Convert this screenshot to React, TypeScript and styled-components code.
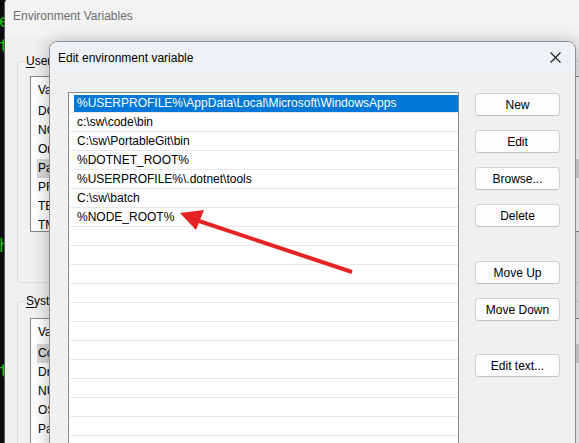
import React from 'react';
import styled, { createGlobalStyle } from 'styled-components';

const GlobalStyle = createGlobalStyle`
  html, body {
    margin: 0;
    padding: 0;
    background: #0c0c0c;
    overflow: hidden;
  }
  * {
    box-sizing: border-box;
  }
`;

const uiFont = `"Liberation Sans", Arial, sans-serif`;

// desktop holding the windows
const Desktop = styled.div`
  position: relative;
  width: 579px;
  height: 443px;
  overflow: hidden;
  background: #0c0c0c;
  font-family: ${uiFont};
  font-size: 12px;
  color: #000;
`;

const Terminal = styled.div`
  display: flex;
  flex-direction: column;
  padding-top: 9px;
  width: 5px;
  height: 100%;
  overflow: hidden;
  font-family: "DejaVu Sans Mono", monospace;
  font-size: 17px;
  line-height: 25px;
  color: #16c60c;
`;

const TermLine = styled.div`
  height: 25px;
  white-space: pre;
  margin-left: -1px;
`;

// parent window: Environment Variables
const ParentWindow = styled.div`
  position: absolute;
  left: 4px;
  top: -4px;
  width: 700px;
  height: 470px;
  background: #f0f0f0;
  border: 1px solid #5c5c5c;
  border-radius: 8px;
  display: flex;
  flex-direction: column;
`;

const ParentTitle = styled.div`
  flex-shrink: 0;
  height: 40px;
  padding: 12px 0 0 8px;
  background: #f3f3f3;
  border-radius: 8px 8px 0 0;
  color: #6d6d6d;
  font-size: 12px;
`;

const ParentBody = styled.div`
  display: flex;
  flex-direction: column;
  padding: 17px 0 0 12px;
`;

const GroupBox = styled.fieldset<{ $height: number; $padTop: number }>`
  flex-shrink: 0;
  margin: 0;
  padding: ${(p) => p.$padTop}px 0 0 12px;
  height: ${(p) => p.$height}px;
  border: 1px solid #dcdcdc;
  border-radius: 3px;
  & + & {
    margin-top: 11px;
  }
`;

const GroupLabel = styled.legend`
  padding: 0 1px;
  margin-left: -5px;
  font-size: 12px;
  line-height: 14px;
  u {
    text-decoration: underline;
    text-underline-offset: 2px;
  }
`;

const VarList = styled.div<{ $height: number }>`
  height: ${(p) => p.$height}px;
  background: #fff;
  border: 1px solid #828790;
  padding: 5px 0 0 6px;
  overflow: hidden;
`;

const VarHeader = styled.div`
  height: 20px;
  line-height: 14px;
  padding: 1px 0 0 1px;
`;

const VarRow = styled.div<{ $selected?: boolean }>`
  height: 19px;
  line-height: 19px;
  padding-left: 1px;
  background: ${(p) => (p.$selected ? '#d9d9d9' : 'transparent')};
  white-space: nowrap;
`;

// dialog: Edit environment variable
const Dialog = styled.div`
  position: absolute;
  left: 49px;
  top: 41px;
  width: 527px;
  height: 420px;
  background: #f0f0f0;
  border: 1px solid #8f8f8f;
  border-radius: 8px 8px 0 0;
  box-shadow: 0 2px 18px rgba(0, 0, 0, 0.28);
  display: flex;
  flex-direction: column;
`;

const TitleBar = styled.div`
  height: 31px;
  flex-shrink: 0;
  display: flex;
  align-items: center;
  justify-content: space-between;
  padding: 0 10px 0 8px;
  background: #eef2f7;
  border-radius: 8px 8px 0 0;
  font-size: 12px;
`;

const CloseButton = styled.div`
  display: flex;
  align-items: center;
  justify-content: center;
  width: 20px;
  height: 20px;
`;

const DialogBody = styled.div`
  flex: 1;
  display: flex;
  gap: 16px;
  padding: 19px 15px 0 18px;
`;

const PathList = styled.div`
  width: 391px;
  height: 400px;
  background: #fff;
  border: 1px solid #8a8a8a;
  border-bottom: none;
  padding: 1px 0 0 1px;
  overflow: hidden;
`;

const PathRow = styled.div`
  height: 19px;
  padding: 1px 0 0 4px;
  border-bottom: 1px solid #e8e8e8;
`;

const PathCell = styled.div<{ $selected?: boolean }>`
  height: 17px;
  line-height: 17px;
  padding-left: 3px;
  white-space: nowrap;
  background: ${(p) => (p.$selected ? '#0078d7' : 'transparent')};
  color: ${(p) => (p.$selected ? '#fff' : '#000')};
`;

const ButtonColumn = styled.div`
  display: flex;
  flex-direction: column;
  gap: 14px;
  padding-top: 1px;
`;

const Button = styled.button<{ $extraGap?: number }>`
  width: 85px;
  height: 23px;
  margin-top: ${(p) => p.$extraGap ?? 0}px;
  padding: 0;
  background: #fdfdfd;
  border: 1px solid #d0d0d0;
  border-bottom-color: #c2c2c2;
  border-radius: 4px;
  font-family: ${uiFont};
  font-size: 12px;
  color: #000;
  line-height: 20px;
`;

const ArrowLayer = styled.svg`
  position: absolute;
  left: 0;
  top: 0;
  pointer-events: none;
`;

const paths = [
  '%USERPROFILE%\\AppData\\Local\\Microsoft\\WindowsApps',
  'c:\\sw\\code\\bin',
  'C:\\sw\\PortableGit\\bin',
  '%DOTNET_ROOT%',
  '%USERPROFILE%\\.dotnet\\tools',
  'C:\\sw\\batch',
  '%NODE_ROOT%',
];

const userVars = ['DOTNET_ROOT', 'NODE_ROOT', 'OneDrive', 'Path', 'PROMPT', 'TEMP', 'TMP'];
const systemVars = ['ComSpec', 'DriverData', 'NUMBER_OF_PROCESSORS', 'OS', 'Path'];

const termLines = ['e', 't', '', '', '', '', '', '', '', 'h', '', '', '', '', 't'];

const App = () => {
  const rows = [...paths, ...Array(14).fill('')];
  return (
    <>
      <GlobalStyle />
      <Desktop>
        <Terminal>
          {termLines.map((t, i) => (
            <TermLine key={i}>{t}</TermLine>
          ))}
        </Terminal>

        <ParentWindow>
          <ParentTitle>Environment Variables</ParentTitle>
          <ParentBody>
            <GroupBox $height={229} $padTop={8}>
              <GroupLabel>
                <u>U</u>ser variables for sw
              </GroupLabel>
              <VarList $height={156}>
                <VarHeader>Variable</VarHeader>
                {userVars.map((v) => (
                  <VarRow key={v} $selected={v === 'Path'}>
                    {v}
                  </VarRow>
                ))}
              </VarList>
            </GroupBox>
            <GroupBox $height={200} $padTop={10}>
              <GroupLabel>
                <u>S</u>ystem variables
              </GroupLabel>
              <VarList $height={200}>
                <VarHeader>Variable</VarHeader>
                {systemVars.map((v) => (
                  <VarRow key={v} $selected={v === 'ComSpec'}>
                    {v}
                  </VarRow>
                ))}
              </VarList>
            </GroupBox>
          </ParentBody>
        </ParentWindow>

        <Dialog>
          <TitleBar>
            <span>Edit environment variable</span>
            <CloseButton>
              <svg width="11" height="11" viewBox="0 0 11 11">
                <path d="M0.5 0.5 L10.5 10.5 M10.5 0.5 L0.5 10.5" stroke="#1a1a1a" strokeWidth="1.1" fill="none" />
              </svg>
            </CloseButton>
          </TitleBar>
          <DialogBody>
            <PathList>
              {rows.map((p, i) => (
                <PathRow key={i}>
                  <PathCell $selected={i === 0}>{p}</PathCell>
                </PathRow>
              ))}
            </PathList>
            <ButtonColumn>
              <Button>New</Button>
              <Button>Edit</Button>
              <Button>Browse...</Button>
              <Button>Delete</Button>
              <Button $extraGap={20}>Move Up</Button>
              <Button>Move Down</Button>
              <Button $extraGap={19}>Edit text...</Button>
            </ButtonColumn>
          </DialogBody>
        </Dialog>

        <ArrowLayer width="579" height="443" viewBox="0 0 579 443">
          <line x1="352" y1="272" x2="193" y2="219" stroke="#e42323" strokeWidth="4" />
          <polygon points="180,213 204,210 196,230" fill="#e42323" />
        </ArrowLayer>
      </Desktop>
    </>
  );
};

export default App;
